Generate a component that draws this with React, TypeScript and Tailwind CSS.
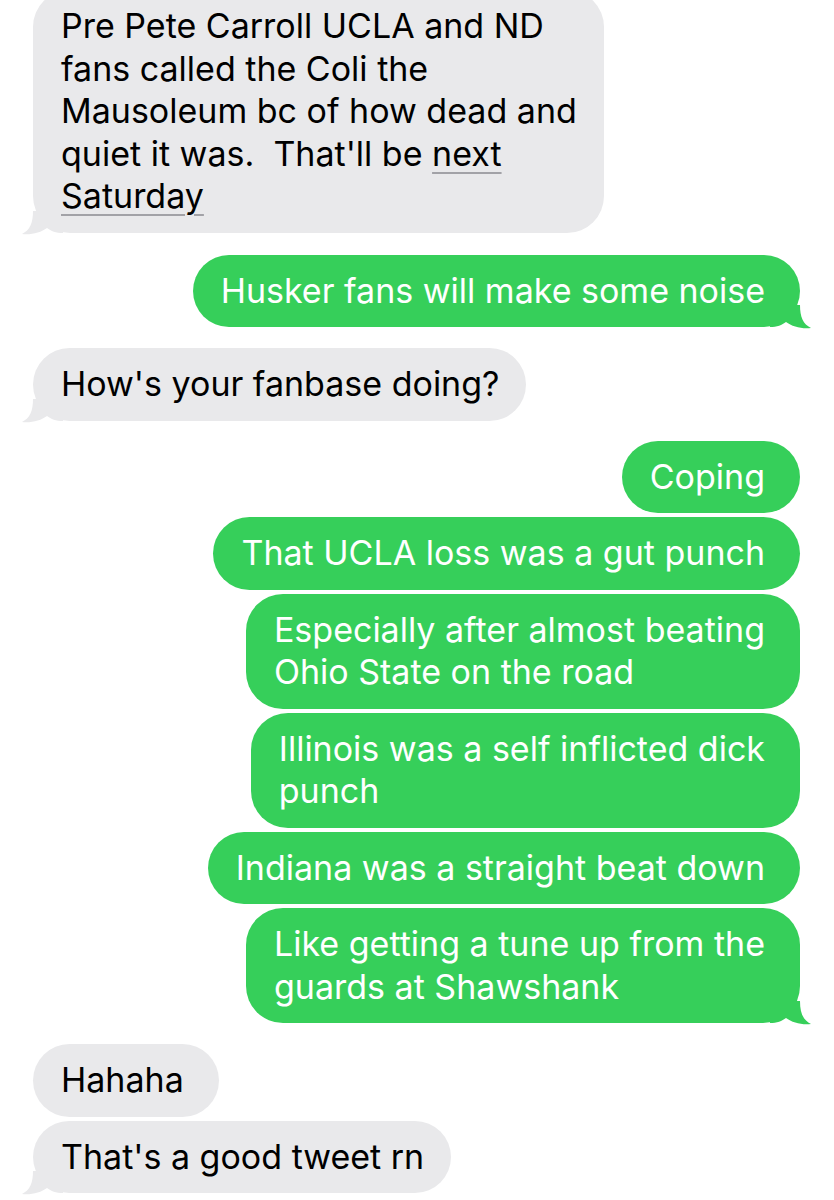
import React from "react";

type Msg = {
  me: boolean;
  lines: React.ReactNode[];
  tail?: boolean;
  gap: string;
  pad?: string;
};

const GREEN = "#36cf5a";
const GREY = "#e9e9eb";

const msgs: Msg[] = [
  {
    me: false,
    tail: true,
    gap: "mt-0",
    lines: [
      "Pre Pete Carroll UCLA and ND",
      "fans called the Coli the",
      "Mausoleum bc of how dead and",
      <>
        quiet it was.{"  "}That'll be{" "}
        <span className="underline decoration-[#a2a2a7] decoration-2 underline-offset-[6px]">next</span>
      </>,
      <span className="underline decoration-[#a2a2a7] decoration-2 underline-offset-[6px]">Saturday</span>,
    ],
  },
  { me: true, tail: true, gap: "mt-[22px]", lines: ["Husker fans will make some noise"] },
  { me: false, tail: true, gap: "mt-[21px]", lines: ["How's your fanbase doing?"] },
  { me: true, gap: "mt-[20px]", lines: ["Coping"] },
  { me: true, gap: "mt-[4px]", lines: ["That UCLA loss was a gut punch"] },
  { me: true, gap: "mt-[4px]", lines: ["Especially after almost beating", "Ohio State on the road"] },
  { me: true, gap: "mt-[4px]", lines: ["Illinois was a self inflicted dick", "punch"] },
  { me: true, gap: "mt-[4px]", lines: ["Indiana was a straight beat down"] },
  { me: true, tail: true, gap: "mt-[4px]", lines: ["Like getting a tune up from the", "guards at Shawshank"] },
  { me: false, gap: "mt-[21px]", pad: "pr-[35px]", lines: ["Hahaha"] },
  { me: false, tail: true, gap: "mt-[4px]", lines: ["That's a good tweet rn"] },
];

// little curl at the bottom corner of the last bubble in a run
function Tail({ me }: { me: boolean }) {
  return (
    <svg
      width="42"
      height="24"
      viewBox="0 0 42 24"
      className={
        me
          ? "absolute -right-[12px] -bottom-[2px]"
          : "absolute -left-[12px] -bottom-[2px] -scale-x-100"
      }
    >
      <path
        d="M0 0 L30 0 C30 12 33 19 41 23 C32 24.2 22 21.5 16 17 C12 20 7 22 0 22 Z"
        fill={me ? GREEN : GREY}
      />
    </svg>
  );
}

function Bubble({ m }: { m: Msg }) {
  const side = m.me
    ? "self-end mr-[34px] bg-[#36cf5a] text-white pr-[35px]"
    : `self-start ml-[33px] bg-[#e9e9eb] text-black ${m.pad ?? "pr-[27px]"}`;
  return (
    <div className={`relative ${m.gap} ${side} rounded-[37px] pl-[28px] py-[15px]`}>
      {m.tail && <Tail me={m.me} />}
      <div className="relative text-[34px] leading-[42.5px] whitespace-pre">
        {m.lines.map((l, i) => (
          <div key={i}>{l}</div>
        ))}
      </div>
    </div>
  );
}

export default function App() {
  return (
    <div
      className="w-[834px] h-[1200px] overflow-hidden bg-white"
      style={{ fontFamily: "Inter, 'Noto Sans', sans-serif" }}
    >
      <div className="flex flex-col -mt-[10px]">
        {msgs.map((m, i) => (
          <Bubble key={i} m={m} />
        ))}
      </div>
    </div>
  );
}
